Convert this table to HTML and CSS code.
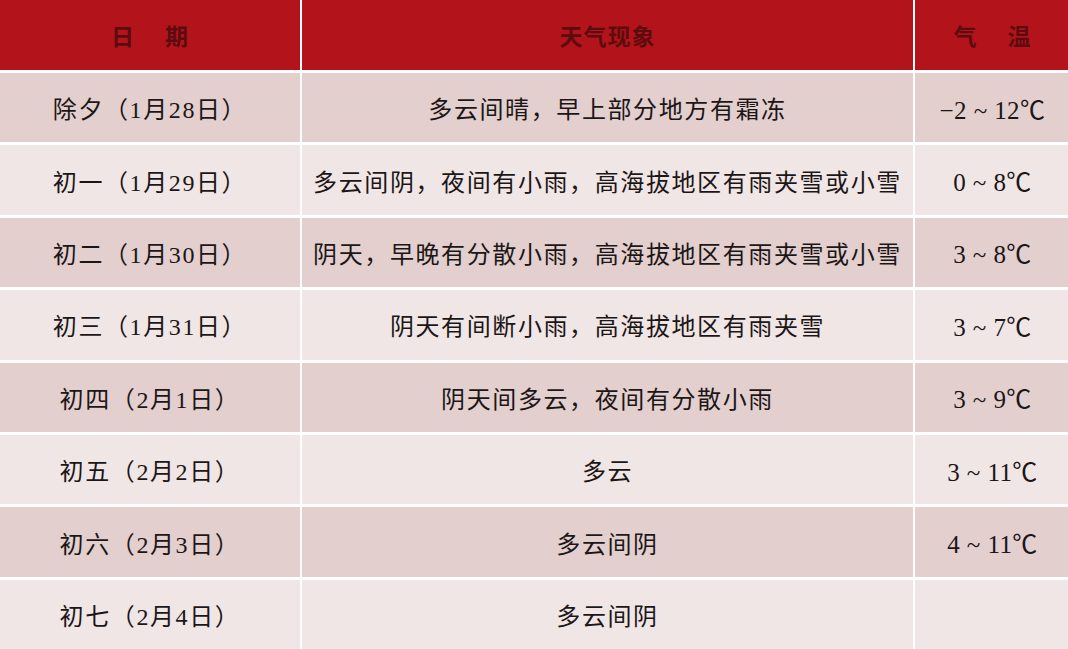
FILE: index.html
```html
<!DOCTYPE html>
<html lang="zh">
<head>
<meta charset="utf-8">
<link rel="stylesheet" href="styles.css">
</head>
<body>
<div class="table">
  <div class="cell head">日<span class="sp"></span>期</div>
  <div class="cell head">天气现象</div>
  <div class="cell head">气<span class="sp"></span>温</div>

  <div class="cell odd">除夕（1月28日）</div>
  <div class="cell odd">多云间晴，早上部分地方有霜冻</div>
  <div class="cell odd temp">−2 ~ 12℃</div>

  <div class="cell even">初一（1月29日）</div>
  <div class="cell even">多云间阴，夜间有小雨，高海拔地区有雨夹雪或小雪</div>
  <div class="cell even temp">0 ~ 8℃</div>

  <div class="cell odd">初二（1月30日）</div>
  <div class="cell odd">阴天，早晚有分散小雨，高海拔地区有雨夹雪或小雪</div>
  <div class="cell odd temp">3 ~ 8℃</div>

  <div class="cell even">初三（1月31日）</div>
  <div class="cell even">阴天有间断小雨，高海拔地区有雨夹雪</div>
  <div class="cell even temp">3 ~ 7℃</div>

  <div class="cell odd">初四（2月1日）</div>
  <div class="cell odd">阴天间多云，夜间有分散小雨</div>
  <div class="cell odd temp">3 ~ 9℃</div>

  <div class="cell even">初五（2月2日）</div>
  <div class="cell even">多云</div>
  <div class="cell even temp">3 ~ 11℃</div>

  <div class="cell odd">初六（2月3日）</div>
  <div class="cell odd">多云间阴</div>
  <div class="cell odd temp">4 ~ 11℃</div>

  <div class="cell even">初七（2月4日）</div>
  <div class="cell even">多云间阴</div>
  <div class="cell even temp"></div>
</div>
</body>
</html>
```

FILE: styles.css
```css
html, body {
  margin: 0;
  padding: 0;
  background: #ffffff;
}
body {
  width: 1068px;
  height: 649px;
  overflow: hidden;
  font-family: "Liberation Serif", "Noto Sans CJK SC", serif;
}
.table {
  display: grid;
  grid-template-columns: 300px 611px 155px;
  grid-template-rows: 70px repeat(8, 69.4px);
  column-gap: 2px;
  row-gap: 3px;
  background: #ffffff;
}
.cell {
  display: flex;
  align-items: center;
  justify-content: center;
  font-size: 24px;
  letter-spacing: 1.6px;
  color: #1c1616;
  white-space: nowrap;
}
.temp {
  letter-spacing: 0.4px;
  font-size: 25px;
}
.head {
  background: #b3131a;
  color: #5c0c0e;
  font-weight: bold;
  font-size: 23px;
  letter-spacing: 1px;
}
.sp {
  display: inline-block;
  width: 30px;
}
.odd {
  background: #e2cfce;
}
.even {
  background: #f1e6e6;
}
```
